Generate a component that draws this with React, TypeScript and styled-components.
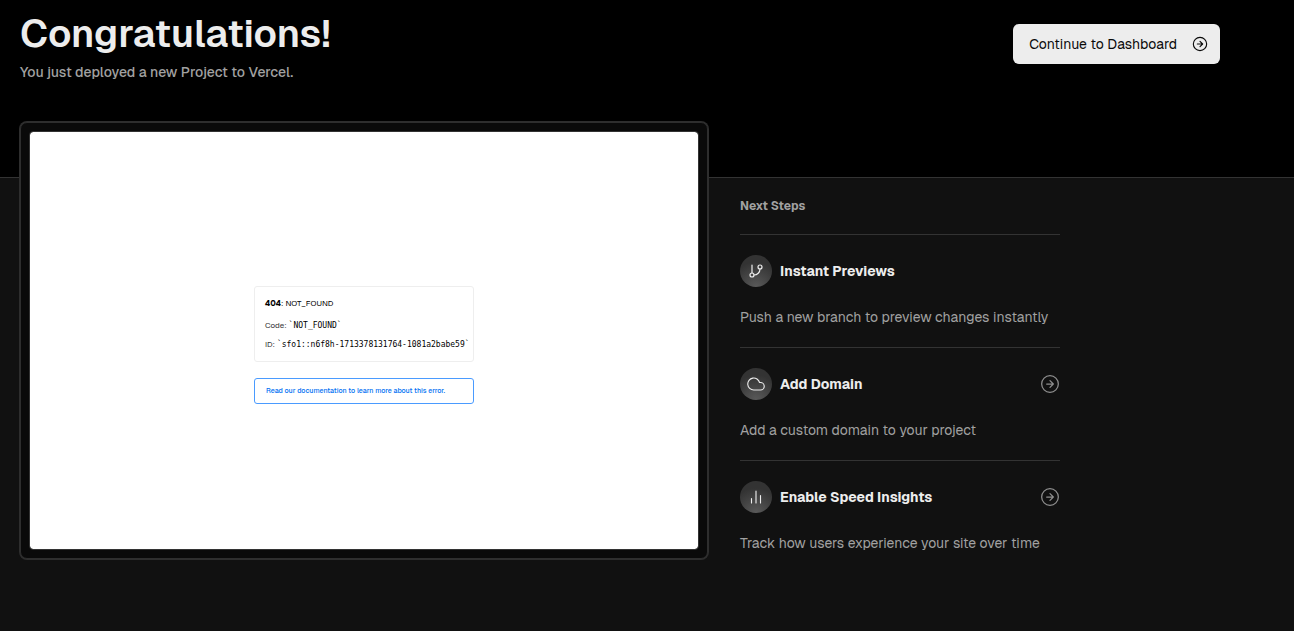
import React from "react";
import styled, { createGlobalStyle } from "styled-components";

const GlobalStyle = createGlobalStyle`
  *, *::before, *::after { box-sizing: border-box; }
  body {
    margin: 0;
    background: #111;
    color: #ededed;
    font-family: Geist, Inter, "Liberation Sans", sans-serif;
    font-size: 14px;
    line-height: 20px;
  }
  h1, h2, h3, p, ul { margin: 0; padding: 0; }
`;

const Page = styled.div`
  min-height: 100vh;
  background: #111;
`;

const Hero = styled.header`
  height: 178px;
  background: #000;
  border-bottom: 1px solid #333;
`;

const Container = styled.div`
  max-width: 1240px;
  padding: 0 20px;
`;

const HeroContent = styled(Container)`
  display: flex;
  justify-content: space-between;
  align-items: flex-start;
  padding-top: 10px;
`;

const Title = styled.h1`
  font-size: 39px;
  line-height: 48px;
  font-weight: 600;
`;

const Subtitle = styled.p`
  margin-top: 4px;
  font-weight: 500;
  color: #a1a1a1;
`;

const DashboardButton = styled.button`
  display: flex;
  align-items: center;
  gap: 15px;
  height: 40px;
  margin-top: 14px;
  padding: 0 12px 0 16px;
  border: 0;
  border-radius: 6px;
  background: #ededed;
  color: #0a0a0a;
  font: inherit;
  white-space: nowrap;
  cursor: pointer;
`;

const Main = styled(Container).attrs({ as: "main" })`
  display: grid;
  grid-template-columns: minmax(0, 688px) 320px;
  gap: 32px;
  align-items: start;
  padding-bottom: 40px;
`;

const Frame = styled.section`
  position: relative;
  margin-top: -56px;
  padding: 8px;
  border: 1px solid #2e2e2e;
  border-radius: 7px;
  background: #0a0a0a;
  box-shadow: 0 0 0 1px #2e2e2e;
`;

const Screen = styled.div`
  display: flex;
  flex-direction: column;
  align-items: center;
  justify-content: center;
  gap: 16px;
  aspect-ratio: 8 / 5;
  padding-top: 10px;
  border: 1px solid #333;
  border-radius: 4px;
  background: #fff;
  background-clip: padding-box;
  color: #000;
  font-size: 8px;
  line-height: 10px;
`;

const ErrorCard = styled.div`
  display: flex;
  flex-direction: column;
  gap: 8px;
  width: 220px;
  height: 76px;
  padding: 11px 10px;
  border: 1px solid #eee;
  border-radius: 3px;
  white-space: nowrap;
`;

const ErrorTitle = styled.p`
  margin-bottom: 4px;
`;

const ErrorLine = styled.p`
  color: #333;

  code {
    color: #000;
    font-family: "DejaVu Sans Mono", monospace;
    font-size: 8px;
  }
`;

const DocsLink = styled.a`
  display: flex;
  align-items: center;
  width: 220px;
  height: 26px;
  padding: 0 11px;
  border: 1px solid #4a9bff;
  border-radius: 3px;
  color: #0070f3;
  font-size: 7px;
  font-weight: 500;
  text-decoration: none;
  white-space: nowrap;
`;

const Steps = styled.section`
  padding-top: 20px;
`;

const StepsTitle = styled.h2`
  margin-bottom: 20px;
  color: #a1a1a1;
  font-size: 12px;
  line-height: 16px;
  font-weight: 700;
`;

const StepList = styled.ul`
  list-style: none;
`;

const Step = styled.li`
  padding: 20px 0;
  border-top: 1px solid #333;
`;

const StepHead = styled.div`
  display: flex;
  align-items: center;
  gap: 8px;
  margin-bottom: 20px;
`;

const StepBadge = styled.span`
  display: flex;
  align-items: center;
  justify-content: center;
  width: 32px;
  height: 32px;
  border-radius: 50%;
  background: radial-gradient(circle at 50% 100%, #5a5a5a, #333 70%);
`;

const StepName = styled.h3`
  flex: 1;
  font-size: 14px;
  line-height: 20px;
  font-weight: 700;
`;

const StepLink = styled.a`
  display: flex;
  color: #8f8f8f;
`;

const StepText = styled.p`
  color: #a1a1a1;
  white-space: nowrap;
`;

interface IconProps {
  size: number;
  stroke?: number;
  children?: React.ReactNode;
}

function Icon({ size, stroke = 1.5, children }: IconProps) {
  return (
    <svg
      width={size}
      height={size}
      viewBox="0 0 24 24"
      fill="none"
      stroke="currentColor"
      strokeWidth={stroke}
      strokeLinecap="round"
      strokeLinejoin="round"
      aria-hidden="true"
    >
      {children}
    </svg>
  );
}

const ArrowCircle = ({ size, stroke }: IconProps) => (
  <Icon size={size} stroke={stroke}>
    <circle cx="12" cy="12" r="10" />
    <path d="M12 16l4-4-4-4M8 12h8" />
  </Icon>
);

const BranchIcon = () => (
  <Icon size={16} stroke={1.8}>
    <path d="M6 3v12M18 9a9 9 0 0 1-9 9" />
    <circle cx="18" cy="6" r="3" />
    <circle cx="6" cy="18" r="3" />
  </Icon>
);

const CloudIcon = () => (
  <Icon size={18}>
    <path d="M18 10h-1.26A8 8 0 1 0 9 20h9a5 5 0 0 0 0-10z" />
  </Icon>
);

const BarsIcon = () => (
  <Icon size={18}>
    <path d="M18 20V10M12 20V4M6 20v-6" />
  </Icon>
);

const steps = [
  {
    name: "Instant Previews",
    text: "Push a new branch to preview changes instantly",
    icon: <BranchIcon />,
  },
  {
    name: "Add Domain",
    text: "Add a custom domain to your project",
    icon: <CloudIcon />,
    href: "#domains",
  },
  {
    name: "Enable Speed Insights",
    text: "Track how users experience your site over time",
    icon: <BarsIcon />,
    href: "#speed-insights",
  },
];

export default function App() {
  return (
    <Page>
      <GlobalStyle />
      <Hero>
        <HeroContent>
          <div>
            <Title>Congratulations!</Title>
            <Subtitle>You just deployed a new Project to Vercel.</Subtitle>
          </div>
          <DashboardButton type="button">
            Continue to Dashboard
            <ArrowCircle size={16} stroke={1.7} />
          </DashboardButton>
        </HeroContent>
      </Hero>
      <Main>
        <Frame>
          <Screen>
            <ErrorCard>
              <ErrorTitle>
                <strong>404</strong>: NOT_FOUND
              </ErrorTitle>
              <ErrorLine>
                Code: <code>`NOT_FOUND`</code>
              </ErrorLine>
              <ErrorLine>
                ID: <code>`sfo1::n6f8h-1713378131764-1081a2babe59`</code>
              </ErrorLine>
            </ErrorCard>
            <DocsLink href="#docs">
              Read our documentation to learn more about this error.
            </DocsLink>
          </Screen>
        </Frame>
        <Steps>
          <StepsTitle>Next Steps</StepsTitle>
          <StepList>
            {steps.map((step) => (
              <Step key={step.name}>
                <StepHead>
                  <StepBadge>{step.icon}</StepBadge>
                  <StepName>{step.name}</StepName>
                  {step.href && (
                    <StepLink href={step.href} aria-label={step.name}>
                      <ArrowCircle size={20} />
                    </StepLink>
                  )}
                </StepHead>
                <StepText>{step.text}</StepText>
              </Step>
            ))}
          </StepList>
        </Steps>
      </Main>
    </Page>
  );
}
